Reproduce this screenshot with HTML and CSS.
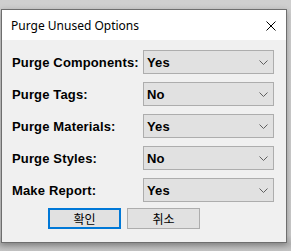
FILE: index.html
```html
<!DOCTYPE html>
<html lang="ko">
<head>
    <meta charset="UTF-8">
    <title>Purge Unused Options</title>
    <link rel="stylesheet" href="styles.css">
</head>
<body>
    <div class="dialog">
        <div class="title-bar">
            <span class="title">Purge Unused Options</span>
            <svg class="close" width="10" height="10" viewBox="0 0 10 10">
                <path d="M0.5 0.5L9.5 9.5M9.5 0.5L0.5 9.5" stroke="#000" stroke-width="1" fill="none"/>
            </svg>
        </div>

        <div class="dialog-body">
            <div class="options">
                <label class="option-label">Purge Components:</label>
                <div class="combo"><span>Yes</span><svg class="chevron" width="9" height="5" viewBox="0 0 9 5"><path d="M0.5 0.5L4.5 4.5L8.5 0.5" stroke="#606060" fill="none"/></svg></div>

                <label class="option-label">Purge Tags:</label>
                <div class="combo"><span>No</span><svg class="chevron" width="9" height="5" viewBox="0 0 9 5"><path d="M0.5 0.5L4.5 4.5L8.5 0.5" stroke="#606060" fill="none"/></svg></div>

                <label class="option-label">Purge Materials:</label>
                <div class="combo"><span>Yes</span><svg class="chevron" width="9" height="5" viewBox="0 0 9 5"><path d="M0.5 0.5L4.5 4.5L8.5 0.5" stroke="#606060" fill="none"/></svg></div>

                <label class="option-label">Purge Styles:</label>
                <div class="combo"><span>No</span><svg class="chevron" width="9" height="5" viewBox="0 0 9 5"><path d="M0.5 0.5L4.5 4.5L8.5 0.5" stroke="#606060" fill="none"/></svg></div>

                <label class="option-label">Make Report:</label>
                <div class="combo"><span>Yes</span><svg class="chevron" width="9" height="5" viewBox="0 0 9 5"><path d="M0.5 0.5L4.5 4.5L8.5 0.5" stroke="#606060" fill="none"/></svg></div>
            </div>

            <div class="buttons">
                <button class="btn btn-default">확인</button>
                <button class="btn">취소</button>
            </div>
        </div>
    </div>
</body>
</html>
```

FILE: styles.css
```css
* {
    box-sizing: border-box;
    margin: 0;
    padding: 0;
}

body {
    background: linear-gradient(to bottom, #cfcfcf 0, #cbcbcb 235px, #b4b4b4 244px, #c4c4c4 251px);
    height: 251px;
    overflow: hidden;
    font-family: 'Liberation Sans', Arial, sans-serif;
}

.dialog {
    width: 286px;
    height: 234px;
    margin: 9px 0 0 1px;
    border: 1px solid #6e6e6e;
    background-color: #f0f0f0;
    box-shadow: 0 2px 6px rgba(0, 0, 0, 0.3);
}

.title-bar {
    height: 30px;
    background-color: #fff;
    display: flex;
    align-items: center;
    justify-content: space-between;
    padding: 0 10px 0 9px;
}

.title {
    font-family: 'Noto Sans', 'Open Sans', sans-serif;
    font-size: 12px;
    color: #000;
    margin-top: 1px;
}

.close {
    display: block;
    margin-top: 1px;
}

.dialog-body {
    padding: 10px 10px 0 10px;
}

.options {
    display: grid;
    grid-template-columns: 131px 131px;
    grid-auto-rows: 24px;
    row-gap: 8px;
    align-items: center;
}

.option-label {
    font-weight: bold;
    font-size: 13px;
    letter-spacing: 0.15px;
    color: #000;
}

.combo {
    height: 24px;
    display: flex;
    align-items: center;
    justify-content: space-between;
    padding: 0 5px 0 3px;
    background-color: #e1e1e1;
    border: 1px solid #adadad;
    font-weight: bold;
    font-size: 13px;
    letter-spacing: 0.15px;
    color: #000;
}

.chevron {
    display: block;
}

.buttons {
    display: flex;
    gap: 6px;
    margin: 6px 0 0 36px;
}

.btn {
    width: 73px;
    height: 21px;
    background-color: #e1e1e1;
    border: 1px solid #adadad;
    font-family: 'Noto Sans CJK KR', sans-serif;
    font-size: 12px;
    color: #000;
}

.btn-default {
    border: 2px solid #0078d7;
}
```
